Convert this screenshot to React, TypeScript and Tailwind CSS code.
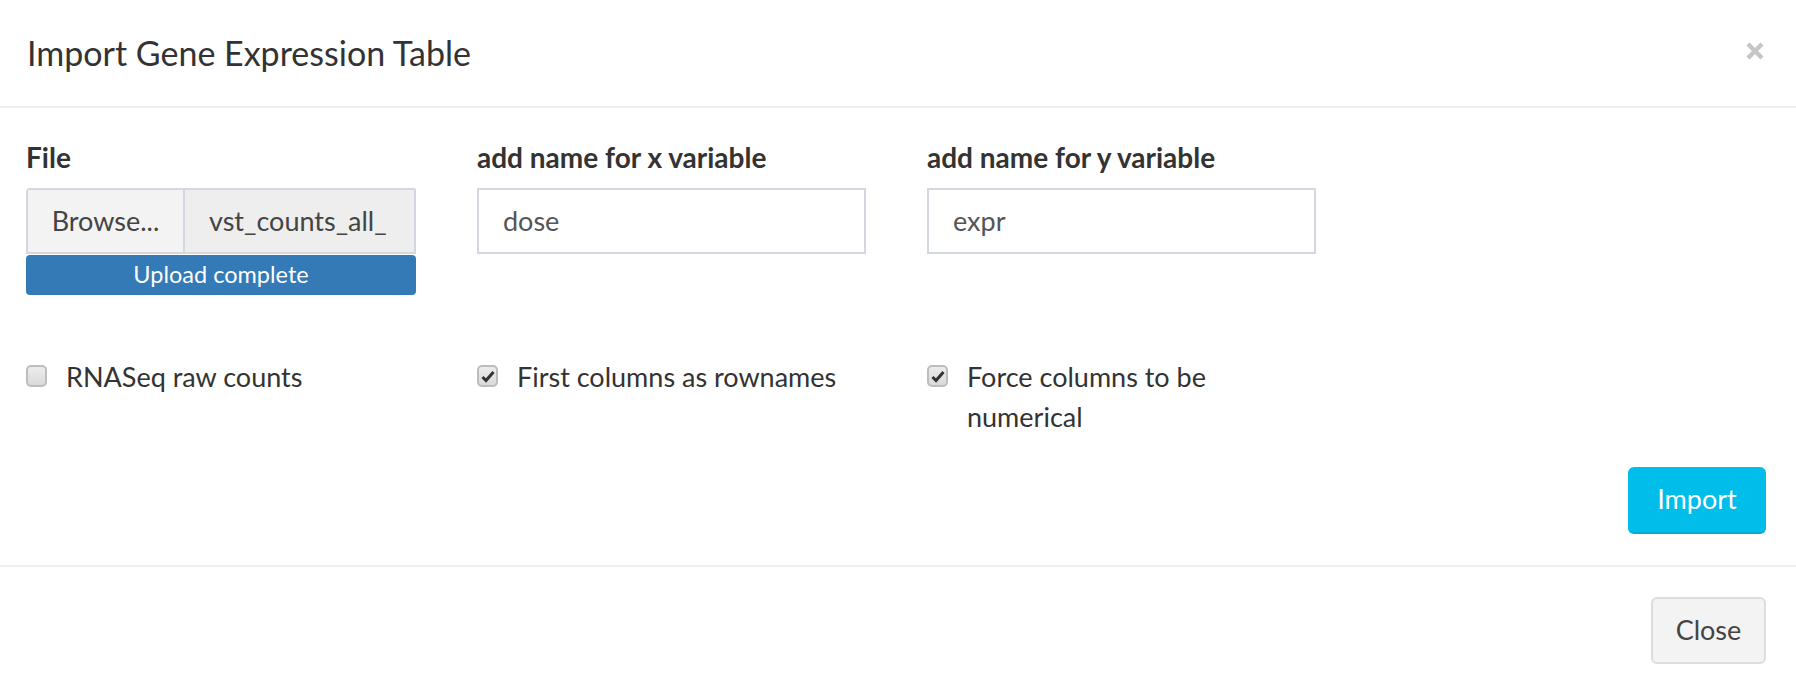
import React from 'react';

type CheckOption = {
  id: string;
  label: string;
  checked: boolean;
};

const options: CheckOption[] = [
  { id: 'raw', label: 'RNASeq raw counts', checked: false },
  { id: 'rownames', label: 'First columns as rownames', checked: true },
  { id: 'numeric', label: 'Force columns to be numerical', checked: true },
];

const CheckBox: React.FC<{ checked: boolean }> = ({ checked }) => (
  <span className="mt-[8px] flex h-[22px] w-[21px] shrink-0 items-center justify-center rounded-[5px] border-2 border-[#bdbdbd] bg-gradient-to-b from-[#ececec] to-[#dadada]">
    {checked && (
      <svg width="14" height="13" viewBox="0 0 14 13">
        <path d="M1.5 7 L5 10.5 L12.5 2" fill="none" stroke="#333" strokeWidth="3" />
      </svg>
    )}
  </span>
);

const TextField: React.FC<{ label: string; value: string }> = ({ label, value }) => (
  <div>
    <label className="block text-[28px] leading-[36px] font-bold text-[#333]">{label}</label>
    <div className="mt-[13px] flex h-[66px] w-[389px] items-center border-2 border-[#d3d7df] pl-[24px] text-[27px] text-[#555]">
      {value}
    </div>
  </div>
);

export default function App() {
  return (
    <div className="h-[694px] w-[1796px] overflow-hidden bg-white font-['Lato',sans-serif] text-[#333]">
      {/* header */}
      <div className="flex h-[108px] items-center justify-between border-b-2 border-[#efefef] pl-[27px] pr-[32px]">
        <h4 className="text-[34px] leading-[38px] text-[#333]">Import Gene Expression Table</h4>
        <button className="mb-[4px]">
          <svg width="18" height="18" viewBox="0 0 18 18">
            <path d="M2 2 L16 16 M16 2 L2 16" stroke="#c6c6c6" strokeWidth="4.5" />
          </svg>
        </button>
      </div>

      {/* body */}
      <div className="pl-[26px] pr-[30px] pt-[31px] pb-[31px]">
        <div className="grid grid-cols-[451px_450px_390px]">
          <div>
            <label className="block text-[28px] leading-[36px] font-bold text-[#333]">File</label>
            <div className="mt-[13px] w-[390px]">
              <div className="flex h-[66px] overflow-hidden rounded-tl-[4px] rounded-tr-[2px] border-2 border-[#d3d7df] text-[27px] text-[#444]">
                <div className="flex w-[157px] items-center justify-center border-r-2 border-[#d3d7df] bg-[#f3f3f3]">
                  Browse...
                </div>
                <div className="flex flex-1 items-center overflow-hidden whitespace-nowrap bg-[#eeeeee] pl-[24px]">
                  vst_counts_all_
                </div>
              </div>
              <div className="mt-[1px] flex h-[40px] items-center justify-center rounded-[4px] bg-[#337ab7] text-[23.5px] text-white">
                Upload complete
              </div>
            </div>
          </div>
          <TextField label="add name for x variable" value="dose" />
          <TextField label="add name for y variable" value="expr" />
        </div>

        <div className="mt-[62px] grid grid-cols-[451px_450px_390px]">
          {options.map((opt) => (
            <div key={opt.id} className="flex items-start gap-[19px]">
              <CheckBox checked={opt.checked} />
              <span className="w-[345px] text-[27px] leading-[40px] text-[#333]">{opt.label}</span>
            </div>
          ))}
        </div>

        <div className="mt-[30px] flex justify-end">
          <button className="h-[67px] w-[138px] rounded-[6px] border-b-2 border-[#02acd6] bg-[#00bdea] text-[27px] text-white">
            Import
          </button>
        </div>
      </div>

      {/* footer */}
      <div className="flex justify-end border-t-2 border-[#efefef] pl-[26px] pr-[30px] pt-[30px] pb-[28px]">
        <button className="h-[67px] w-[115px] rounded-[6px] border-2 border-[#dddddd] bg-[#f3f3f3] text-[27px] text-[#444]">
          Close
        </button>
      </div>
    </div>
  );
}
